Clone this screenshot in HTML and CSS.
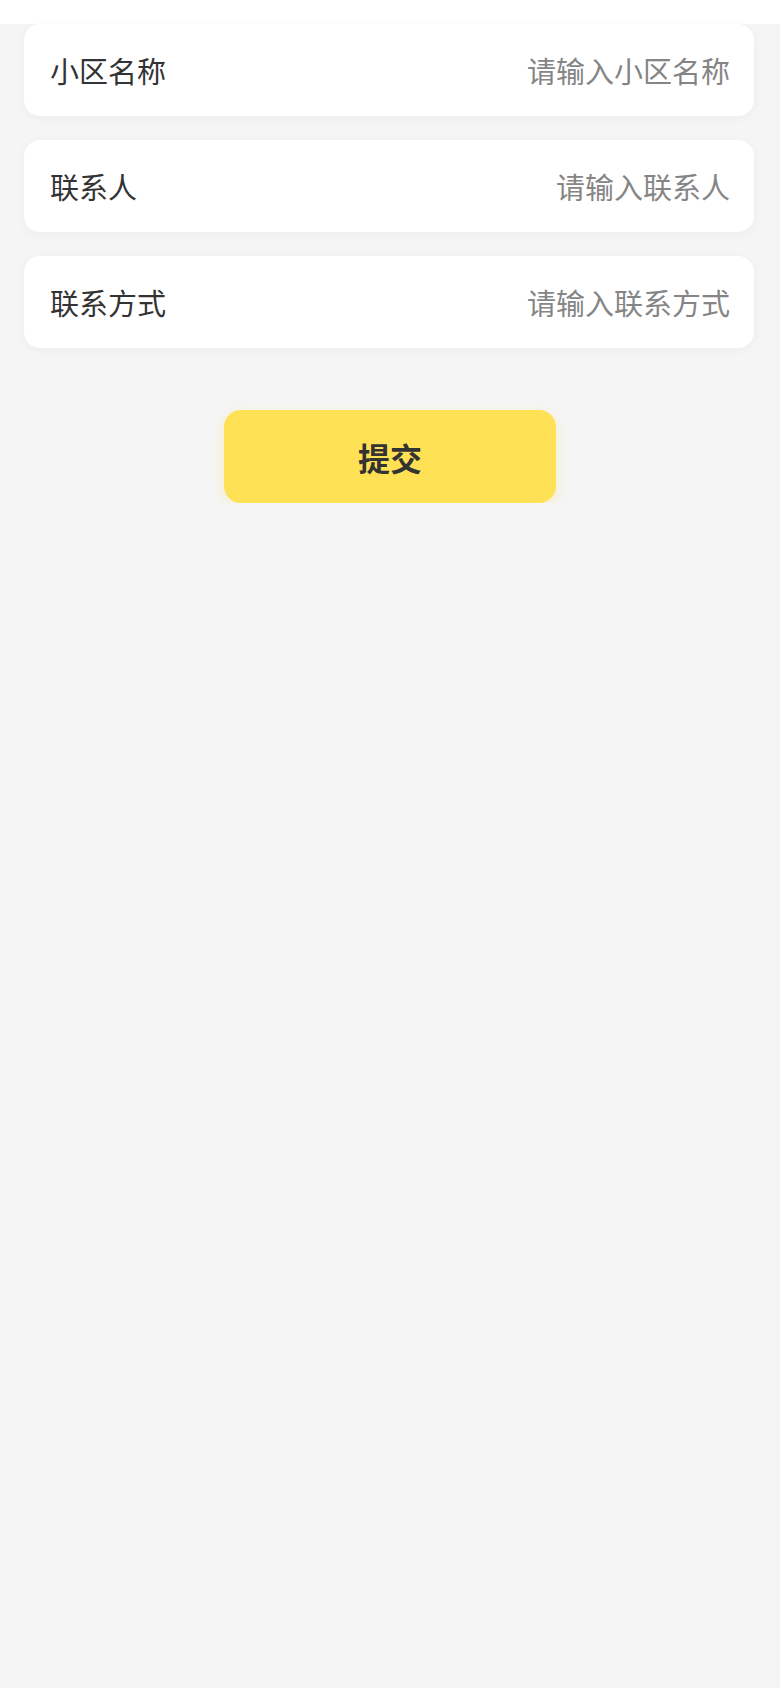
FILE: index.html
```html
<!DOCTYPE html>
<html lang="zh-CN">
<head>
<meta charset="utf-8">
<meta name="viewport" content="width=device-width, initial-scale=1">
<title>提交</title>
<link rel="stylesheet" href="styles.css">
</head>
<body>
<div class="topbar"></div>
<main class="form">
  <div class="field">
    <span class="label">小区名称</span>
    <input class="input" type="text" placeholder="请输入小区名称">
  </div>
  <div class="field">
    <span class="label">联系人</span>
    <input class="input" type="text" placeholder="请输入联系人">
  </div>
  <div class="field">
    <span class="label">联系方式</span>
    <input class="input" type="text" placeholder="请输入联系方式">
  </div>
  <div class="actions">
    <button class="submit" type="button">提交</button>
  </div>
</main>
</body>
</html>
```
FILE: styles.css
```css
* { box-sizing: border-box; }
html, body {
  margin: 0;
  padding: 0;
  background: #f5f5f5;
  font-family: "Noto Sans CJK SC", "Noto Sans", sans-serif;
  min-height: 100%;
}
.topbar {
  height: 24px;
  background: #ffffff;
}
.form {
  display: flex;
  flex-direction: column;
  gap: 24px;
  padding: 0 26px 0 24px;
}
.field {
  height: 92px;
  background: #ffffff;
  border-radius: 16px;
  box-shadow: 0 2px 10px rgba(0, 0, 0, 0.04);
  display: flex;
  align-items: center;
  justify-content: space-between;
  padding: 0 24px 0 26px;
}
.label {
  font-size: 29px;
  color: #333333;
  white-space: nowrap;
  line-height: 1;
}
.input {
  flex: 1;
  min-width: 0;
  border: none;
  outline: none;
  background: transparent;
  text-align: right;
  font-family: inherit;
  font-size: 29px;
  color: #333333;
  padding: 0;
}
.input::placeholder {
  color: #858585;
}
.actions {
  display: flex;
  justify-content: center;
  padding-top: 38px;
  margin-left: -24px;
  margin-right: -26px;
}
.submit {
  width: 332px;
  height: 93px;
  border: none;
  border-radius: 17px;
  background: #ffe155;
  color: #333333;
  font-family: inherit;
  font-size: 32px;
  font-weight: 700;
  box-shadow: 0 4px 14px rgba(255, 215, 60, 0.25);
  cursor: pointer;
}
```
